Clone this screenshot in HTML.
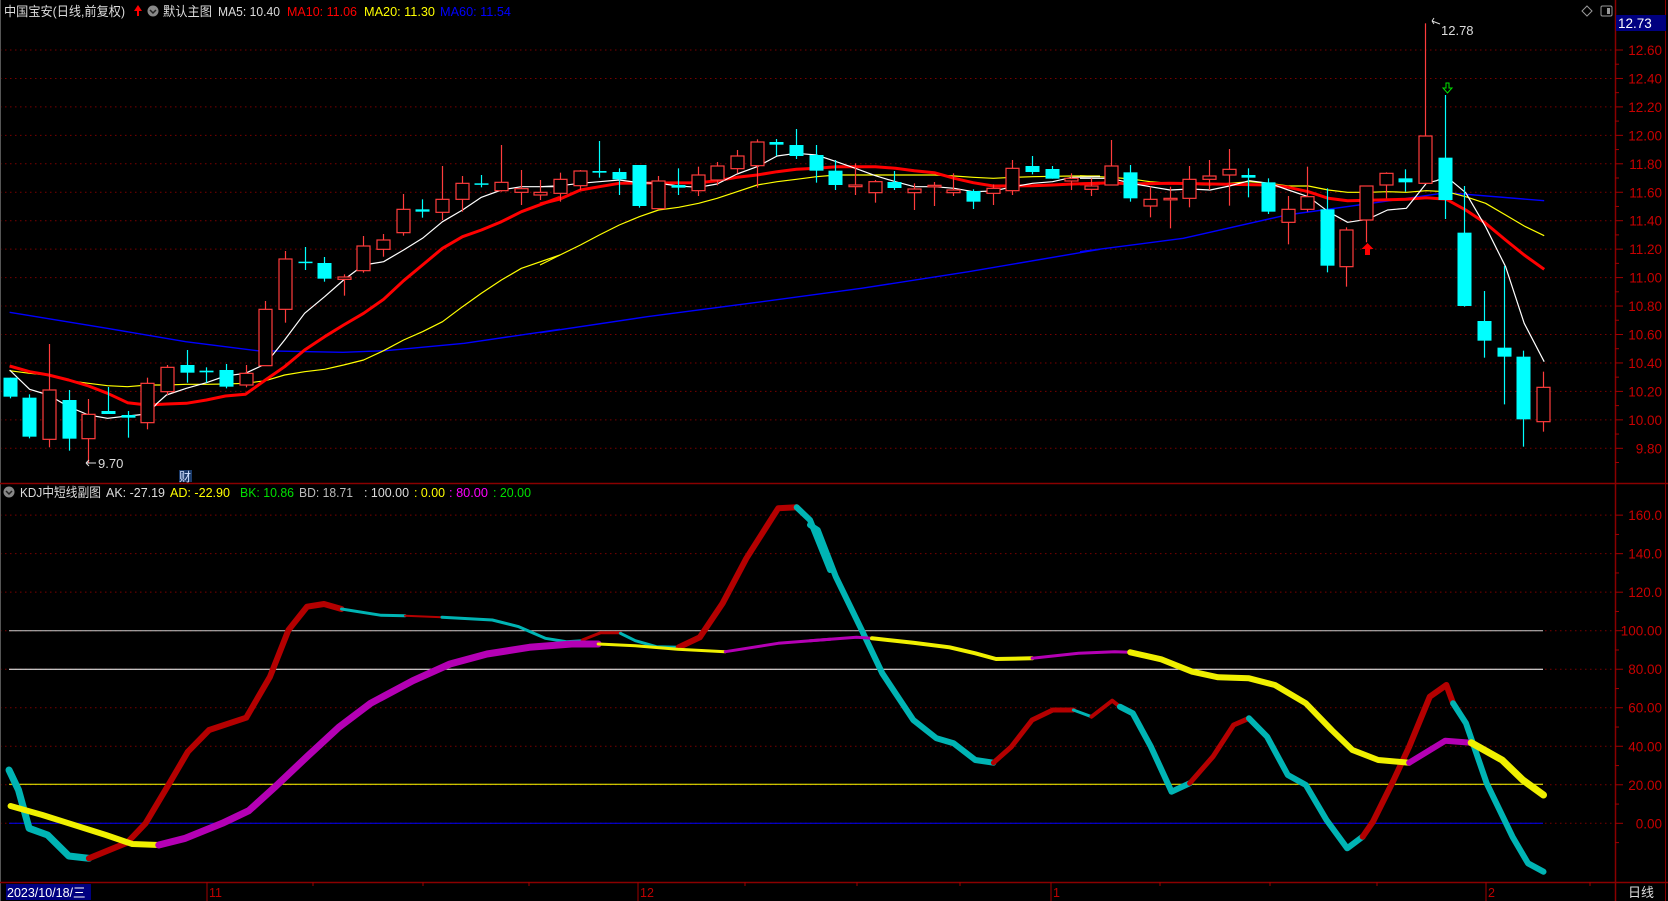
<!DOCTYPE html>
<html><head><meta charset="utf-8">
<style>
html,body{margin:0;padding:0;background:#000;width:1668px;height:901px;overflow:hidden}
svg{display:block}
text{font-family:"Liberation Sans","Noto Sans CJK SC",sans-serif}
</style></head>
<body>
<svg id="s" width="1668" height="901" viewBox="0 0 1668 901" xmlns="http://www.w3.org/2000/svg">
<rect width="1668" height="901" fill="#000"/>
<g id="grid"></g>
<g id="kdj"></g>
<g id="ma"></g>
<g id="cand"></g>
<line x1="0.5" y1="0" x2="0.5" y2="901" stroke="#555" stroke-width="1"/>
<line x1="1615.5" y1="0" x2="1615.5" y2="901" stroke="#8a0000" stroke-width="1.5"/>
<line x1="0" y1="483.5" x2="1668" y2="483.5" stroke="#8a0000" stroke-width="1.5"/>
<line x1="0" y1="882.5" x2="1668" y2="882.5" stroke="#8a0000" stroke-width="1.5"/>
<line x1="1665.5" y1="0" x2="1665.5" y2="901" stroke="#8a0000" stroke-width="1"/>
<g id="axis"></g>
<text x="4" y="16" font-size="13" fill="#dcdcdc" textLength="121" lengthAdjust="spacingAndGlyphs">中国宝安(日线,前复权)</text>
<path d="M137 16 V11 H134 L138 5 L142 11 H139 V16 Z" fill="#ff0000"/>
<circle cx="153" cy="11" r="5.5" fill="#888"/>
<path d="M150 10 L153 13 L156 10" stroke="#222" stroke-width="1.5" fill="none"/>
<text x="163" y="16" font-size="13" fill="#dcdcdc" textLength="49" lengthAdjust="spacingAndGlyphs">默认主图</text>
<text x="218" y="16" font-size="13" fill="#dcdcdc" textLength="62" lengthAdjust="spacingAndGlyphs">MA5: 10.40</text>
<text x="287" y="16" font-size="13" fill="#ff0000" textLength="70" lengthAdjust="spacingAndGlyphs">MA10: 11.06</text>
<text x="364" y="16" font-size="13" fill="#ffff00" textLength="71" lengthAdjust="spacingAndGlyphs">MA20: 11.30</text>
<text x="440" y="16" font-size="13" fill="#0000ff" textLength="71" lengthAdjust="spacingAndGlyphs">MA60: 11.54</text>
<path d="M1587 6 L1592 11 L1587 16 L1582 11 Z" stroke="#999" fill="none"/>
<rect x="1601" y="6" width="11" height="10" rx="1.5" stroke="#999" fill="none"/>
<rect x="1607" y="8" width="3" height="6" fill="#999"/>
<rect x="1616" y="15" width="50" height="16" fill="#000080"/>
<text x="1618" y="28" font-size="13.5" fill="#fff">12.73</text>
<path d="M1440 24 L1432 21 M1432 21 L1434 18 M1432 21 L1434 24" stroke="#ddd" fill="none"/>
<text x="1441" y="35" font-size="13" fill="#dcdcdc">12.78</text>
<path d="M86 463 H96 M86 463 L89 460 M86 463 L89 466" stroke="#ddd" fill="none"/>
<text x="98" y="468" font-size="13" fill="#dcdcdc">9.70</text>
<rect x="179" y="470" width="13" height="12" fill="#1a3a6a"/>
<text x="179" y="481" font-size="12" fill="#cfe0ff">财</text>
<path d="M1446 83 V88 H1443 L1447.5 93 L1452 88 H1449 V83 Z" stroke="#00e000" fill="none"/>
<path d="M1365 255 V249 H1361.5 L1367.5 243 L1373.5 249 H1370 V255 Z" fill="#ff0000"/>
<circle cx="9" cy="492" r="5.5" fill="#888"/>
<path d="M6 491 L9 494 L12 491" stroke="#222" stroke-width="1.5" fill="none"/>
<text x="20" y="497" font-size="13" fill="#dcdcdc" textLength="81" lengthAdjust="spacingAndGlyphs">KDJ中短线副图</text>
<text x="106" y="497" font-size="13" fill="#dcdcdc" textLength="59" lengthAdjust="spacingAndGlyphs">AK: -27.19</text>
<text x="170" y="497" font-size="13" fill="#ffff00" textLength="60" lengthAdjust="spacingAndGlyphs">AD: -22.90</text>
<text x="240" y="497" font-size="13" fill="#00e000" textLength="54" lengthAdjust="spacingAndGlyphs">BK: 10.86</text>
<text x="299" y="497" font-size="13" fill="#bbbbbb" textLength="54" lengthAdjust="spacingAndGlyphs">BD: 18.71</text>
<text x="364" y="497" font-size="13" fill="#dcdcdc" textLength="45" lengthAdjust="spacingAndGlyphs">: 100.00</text>
<text x="414" y="497" font-size="13" fill="#ffff00" textLength="31" lengthAdjust="spacingAndGlyphs">: 0.00</text>
<text x="449" y="497" font-size="13" fill="#ff00ff" textLength="39" lengthAdjust="spacingAndGlyphs">: 80.00</text>
<text x="493" y="497" font-size="13" fill="#00e000" textLength="38" lengthAdjust="spacingAndGlyphs">: 20.00</text>
<rect x="6" y="884" width="85" height="16" fill="#000080"/>
<text x="7" y="897" font-size="12.5" fill="#fff">2023/10/18/三</text>
<text x="209" y="897" font-size="12.5" fill="#c00000">11</text>
<text x="640" y="897" font-size="12.5" fill="#c00000">12</text>
<text x="1053" y="897" font-size="12.5" fill="#c00000">1</text>
<text x="1488" y="897" font-size="12.5" fill="#c00000">2</text>
<text x="1628" y="897" font-size="13" fill="#dcdcdc">日线</text>
</svg>
<script>
(function(){
var NS="http://www.w3.org/2000/svg";
function el(p,t,a){var e=document.createElementNS(NS,t);for(var k in a)e.setAttribute(k,a[k]);p.appendChild(e);return e;}
var G=document.getElementById('grid'),A=document.getElementById('axis'),C=document.getElementById('cand'),M=document.getElementById('ma'),K=document.getElementById('kdj');
var labs=['12.60','12.40','12.20','12.00','11.80','11.60','11.40','11.20','11.00','10.80','10.60','10.40','10.20','10.00','9.80'];
for(var k=0;k<15;k++){var y=50+k*28.45;
 el(G,'line',{x1:0,y1:y,x2:1615,y2:y,stroke:'#7a0000','stroke-dasharray':'1.5,3.5'});
 el(A,'line',{x1:1615,y1:y,x2:1623,y2:y,stroke:'#a00000'});
 el(A,'line',{x1:1615,y1:y+14.2,x2:1619,y2:y+14.2,stroke:'#a00000'});
 var t=el(A,'text',{x:1662,y:y+5,'font-size':13.5,fill:'#c80000','text-anchor':'end'});t.textContent=labs[k];}
var kv=[160,140,120,100,80,60,40,20,0],kl=['160.0','140.0','120.0','100.00','80.00','60.00','40.00','20.00','0.00'];
for(var k=0;k<kv.length;k++){var y=823.3-kv[k]*1.926;
 el(G,'line',{x1:0,y1:y,x2:1615,y2:y,stroke:'#7a0000','stroke-dasharray':'1.5,3.5'});
 el(A,'line',{x1:1615,y1:y,x2:1623,y2:y,stroke:'#a00000'});
 el(A,'line',{x1:1615,y1:y+19.3,x2:1619,y2:y+19.3,stroke:'#a00000'});
 var t=el(A,'text',{x:1662,y:y+5,'font-size':13.5,fill:'#c80000','text-anchor':'end'});t.textContent=kl[k];}
el(G,'line',{x1:9,y1:630.7,x2:1543,y2:630.7,stroke:'#cccccc'});
el(G,'line',{x1:9,y1:669.3,x2:1543,y2:669.3,stroke:'#ffffff'});
el(G,'line',{x1:9,y1:784.3,x2:1543,y2:784.3,stroke:'#ffff00'});
el(G,'line',{x1:9,y1:823.3,x2:1543,y2:823.3,stroke:'#0000ff'});
[207,638,1051,1486].forEach(function(x){el(A,'line',{x1:x,y1:882,x2:x,y2:901,stroke:'#a00000'});});
[313,423,529,745,857,960,1160,1270,1377,1590].forEach(function(x){el(A,'line',{x1:x,y1:882,x2:x,y2:886,stroke:'#a00000'});});
var Z={5:[0,2.8,140],6:[540,2.8,120],7:[1080,2.904,10],8:[0,1.889,490],9:[810,1.936,490]};
function pts(z,a){var o=Z[z],r=[];for(var i=0;i<a.length;i+=2)r.push((o[0]+a[i]/o[1]).toFixed(1)+','+(o[2]+a[i+1]/3).toFixed(1));return r.join(' ');}
function yv(z,v){return Z[z][2]+v/3;}
function line(col,w,segs){segs.forEach(function(s){el(M,'polyline',{points:pts(s[0],s[1]),fill:'none',stroke:col,'stroke-width':w,'stroke-linejoin':'round'});});}
line('#0000ff',1.4,[[5,[27,517,300,565,520,605,720,632,960,637,1080,632,1300,610,1568,568]],[6,[0,638,300,590,600,548,900,505,1200,455,1568,388]],[7,[0,725,300,685,600,615,900,572,1064,548,1348,572]]]);
line('#ffff00',1.2,[[5,[27,692,83,700,136,705,192,722,248,730,301,737,357,740,413,735,466,735,522,733,578,733,631,732,687,730,743,722,797,705,853,695,909,688,962,675,1018,660,1074,632,1130,600,1183,575,1239,545,1295,500,1348,460,1404,420,1460,385,1568,345]],[6,[0,435,56,405,113,375,166,345,222,315,278,290,332,270,388,262,444,250,496,235,552,215,608,195,664,185,718,178,774,170,830,165,1104,165,1160,168,1213,172,1269,175,1325,172,1379,170,1490,168,1568,168]],[7,[0,497,91,502,149,507,204,515,262,520,320,522,378,525,434,520,492,515,550,520,605,528,663,528,721,540,777,547,835,547,893,545,948,547,1006,542,1064,545,1120,560,1178,580,1236,615,1290,648,1348,677]]]);
line('#ff0000',3,[[5,[27,678,83,695,136,705,192,720,248,738,301,760,357,788,413,795,466,792,522,790,578,780,631,768,687,763,743,720,797,680,853,630,909,590,962,555,1018,520,1074,478,1130,422,1183,375,1239,325,1295,290,1348,270,1404,245,1460,215,1568,172]],[6,[0,252,56,237,113,210,166,200,222,190,444,188,496,182,552,172,608,165,664,155,718,148,774,145,830,140,939,140,995,145,1048,152,1104,158,1160,175,1213,188,1269,198,1379,197,1435,195,1490,192,1568,190]],[7,[0,522,91,518,149,522,262,520,550,525,605,532,663,545,721,565,777,572,948,568,1006,563,1064,568,1120,600,1178,640,1236,690,1290,735,1348,778]]]);
line('#ffffff',1.2,[[5,[27,690,83,748,136,765,192,800,248,825,301,835,357,828,413,822,440,790,466,765,522,745,578,728,631,708,687,700,743,672,797,600,853,520,909,470,962,420,1018,375,1074,365,1130,330,1183,295,1239,245,1295,210,1348,172,1404,150,1460,140,1568,140]],[6,[0,200,56,197,113,190,166,185,222,180,278,188,332,190,388,198,444,202,496,192,552,162,608,140,664,108,718,100,774,105,830,125,883,145,939,167,995,185,1048,200,1104,200,1160,205,1213,215,1269,213,1325,200,1379,190,1435,185,1490,172,1568,170]],[7,[0,505,91,505,149,520,204,530,262,540,320,537,378,540,434,528,492,512,550,520,605,540,663,560,721,605,777,637,835,628,893,600,948,595,1006,520,1035,512,1064,500,1120,548,1178,650,1236,770,1290,940,1348,1055]]]);
var D=[[5,'c',713,770,713,775],[5,'c',773,890,763,895],[5,'r',750,898,612,922],[5,'c',780,896,750,932],[5,'r',823,896,777,968],[5,'c',813,822,741,822],[5,'c',825,833,813,893],[5,'r',730,848,713,868],[5,'r',682,755,675,765],[5,'c',675,698,630,728],[5,'c',692,697,682,728],[5,'c',690,740,672,745],[5,'r',700,735,675,742],[5,'r',508,677,483,677],[5,'r',357,508,333,548],[5,'c',365,369,321,390],[5,'c',369,416,351,425],[5,'r',411,418,403,467],[5,'r',318,392,288,398],[5,'r',300,328,282,350],[5,'r',208,278,162,287],[5,'c',208,215,178,233],[5,'r',178,217,78,240],[5,'r',130,178,108,215],[5,'c',130,134,105,142],[5,'r',127,152,15,155],[5,'r',146,157,90,195],[5,'r',157,165,120,180],
[6,'r',178,220,158,245],[6,'r',153,197,150,210],[6,'c',153,158,63,173],[6,'c',156,178,145,225],[6,'c',135,258,135,263],[6,'r',183,266,168,266],[6,'c',195,203,145,225],[6,'r',165,212,140,228],[6,'r',138,180,126,196],[6,'r',108,146,90,160],[6,'r',66,137,58,203],[6,'c',66,74,57,108],[6,'c',75,108,27,117],[6,'c',105,152,75,188],[6,'c',152,195,120,210],[6,'r',195,200,130,225],[6,'r',185,218,180,248],[6,'c',186,204,153,210],[6,'r',207,218,190,270],[6,'r',196,200,186,258],[6,'r',210,218,160,228],[6,'c',213,245,208,267],[6,'r',205,220,193,255],[6,'r',145,212,120,225],[6,'c',138,156,108,163],[6,'c',147,176,138,176],[6,'r',175,183,160,210],[6,'r',198,208,175,228],
[7,'r',468,525,390,525],[7,'c',487,565,465,575],[7,'r',568,588,530,622],[7,'r',565,569,530,655],[7,'r',508,565,468,592],[7,'r',498,508,450,540],[7,'r',478,495,417,587],[7,'c',495,503,475,562],[7,'c',517,605,505,612],[7,'r',598,637,558,703],[7,'r',560,598,470,605],[7,'c',598,767,535,787],[7,'r',660,770,652,830],[7,'r',528,630,528,697],[7,'r',490,525,487,565],[7,'c',505,517,478,545],[7,'r',378,520,40,520],[7,'c',443,570,255,627],[7,'c',668,888,528,890],[7,'c',933,992,843,1043],[7,'c',1013,1040,768,1183],[7,'c',1040,1228,1022,1310],[7,'r',1132,1235,1085,1265]];
D.forEach(function(d,i){var x=Math.round(9.6+i*19.66)+0.5,z=d[0],t=yv(z,d[2]),b=yv(z,d[3]),h=yv(z,d[4]),l=yv(z,d[5]);if(b-t<1.5)b=t+1.5;
 if(d[1]=='c'){el(C,'line',{x1:x,y1:h,x2:x,y2:l,stroke:'#00ffff','stroke-width':1.2});el(C,'rect',{x:x-7,y:t,width:14,height:b-t,fill:'#00ffff'});}
 else{el(C,'line',{x1:x,y1:h,x2:x,y2:t,stroke:'#ff3c3c','stroke-width':1.2});el(C,'line',{x1:x,y1:b,x2:x,y2:l,stroke:'#ff3c3c','stroke-width':1.2});el(C,'rect',{x:x-6.5,y:t,width:13,height:b-t,fill:'#000',stroke:'#ff3c3c','stroke-width':1.2});}
});
var R='#b40000',Cy='#00b4b4',Y='#f0f000',Mg='#b400b4';
var S=[[8,Cy,7,[17,840,35,900,55,1015,90,1035,130,1098,168,1105]],[8,R,6,[168,1105,240,1058,275,1000,320,880,355,785,395,720,465,683,510,560,545,420,580,350,612,342,645,357]],[8,Cy,3,[645,357,720,376,765,377]],[8,R,2,[765,377,835,382]],[8,Cy,3,[835,382,930,390,980,410,1030,445,1070,455,1100,452]],[8,R,3,[1100,450,1135,428,1172,428]],[8,Cy,3,[1172,430,1200,452,1240,470,1282,472]],[8,R,6,[1282,472,1322,442,1365,340,1410,205,1470,55,1505,52]],[8,Cy,6,[1505,52,1530,90,1568,240]],
[9,Cy,6,[0,105,15,120,50,260,100,420,140,550,200,690,245,745,278,760,320,810,355,818]],[9,R,5,[355,818,390,770,430,690,470,660,510,660]],[9,Cy,3,[510,660,545,680]],[9,R,4,[545,680,585,632,600,650]],[9,Cy,6,[600,650,625,670,660,770,700,905,735,880]],[9,R,5,[735,880,780,800,820,705,850,685]],[9,Cy,6,[850,685,885,740,925,855,960,885,1000,990,1040,1075,1070,1040]],[9,R,6,[1070,1040,1090,995,1130,870,1160,770,1200,620,1232,585,1245,640]],[9,Cy,6,[1245,640,1270,700,1310,880,1360,1040,1390,1120,1420,1145]],
[8,Y,6,[20,948,80,975,130,1000,200,1035,250,1062,300,1065]],[8,Mg,7,[300,1065,350,1045,420,1000,470,962,520,890,580,800,640,712,700,640,780,572,850,522,920,492,1000,472,1080,462,1130,462]],[8,Y,3,[1130,462,1200,467,1280,478,1370,485]],[8,Mg,3,[1370,485,1470,460,1568,448]],
[9,Mg,3,[0,452,90,442,120,445]],[9,Y,4,[120,445,200,458,270,472,320,490,360,507,430,505]],[9,Mg,3,[430,505,520,490,590,485,620,487]],[9,Y,6,[620,487,680,508,740,545,790,562,850,565,900,585,960,640,1010,720,1050,780,1100,810,1160,818]],[9,Mg,6,[1160,818,1230,752,1280,758]],[9,Y,7,[1280,758,1340,810,1380,870,1420,915]]];
S.forEach(function(s){el(K,'polyline',{points:pts(s[0],s[3]),fill:'none',stroke:s[1],'stroke-width':s[2],'stroke-linejoin':'round','stroke-linecap':'round'});});
})();
</script>
</body></html>
